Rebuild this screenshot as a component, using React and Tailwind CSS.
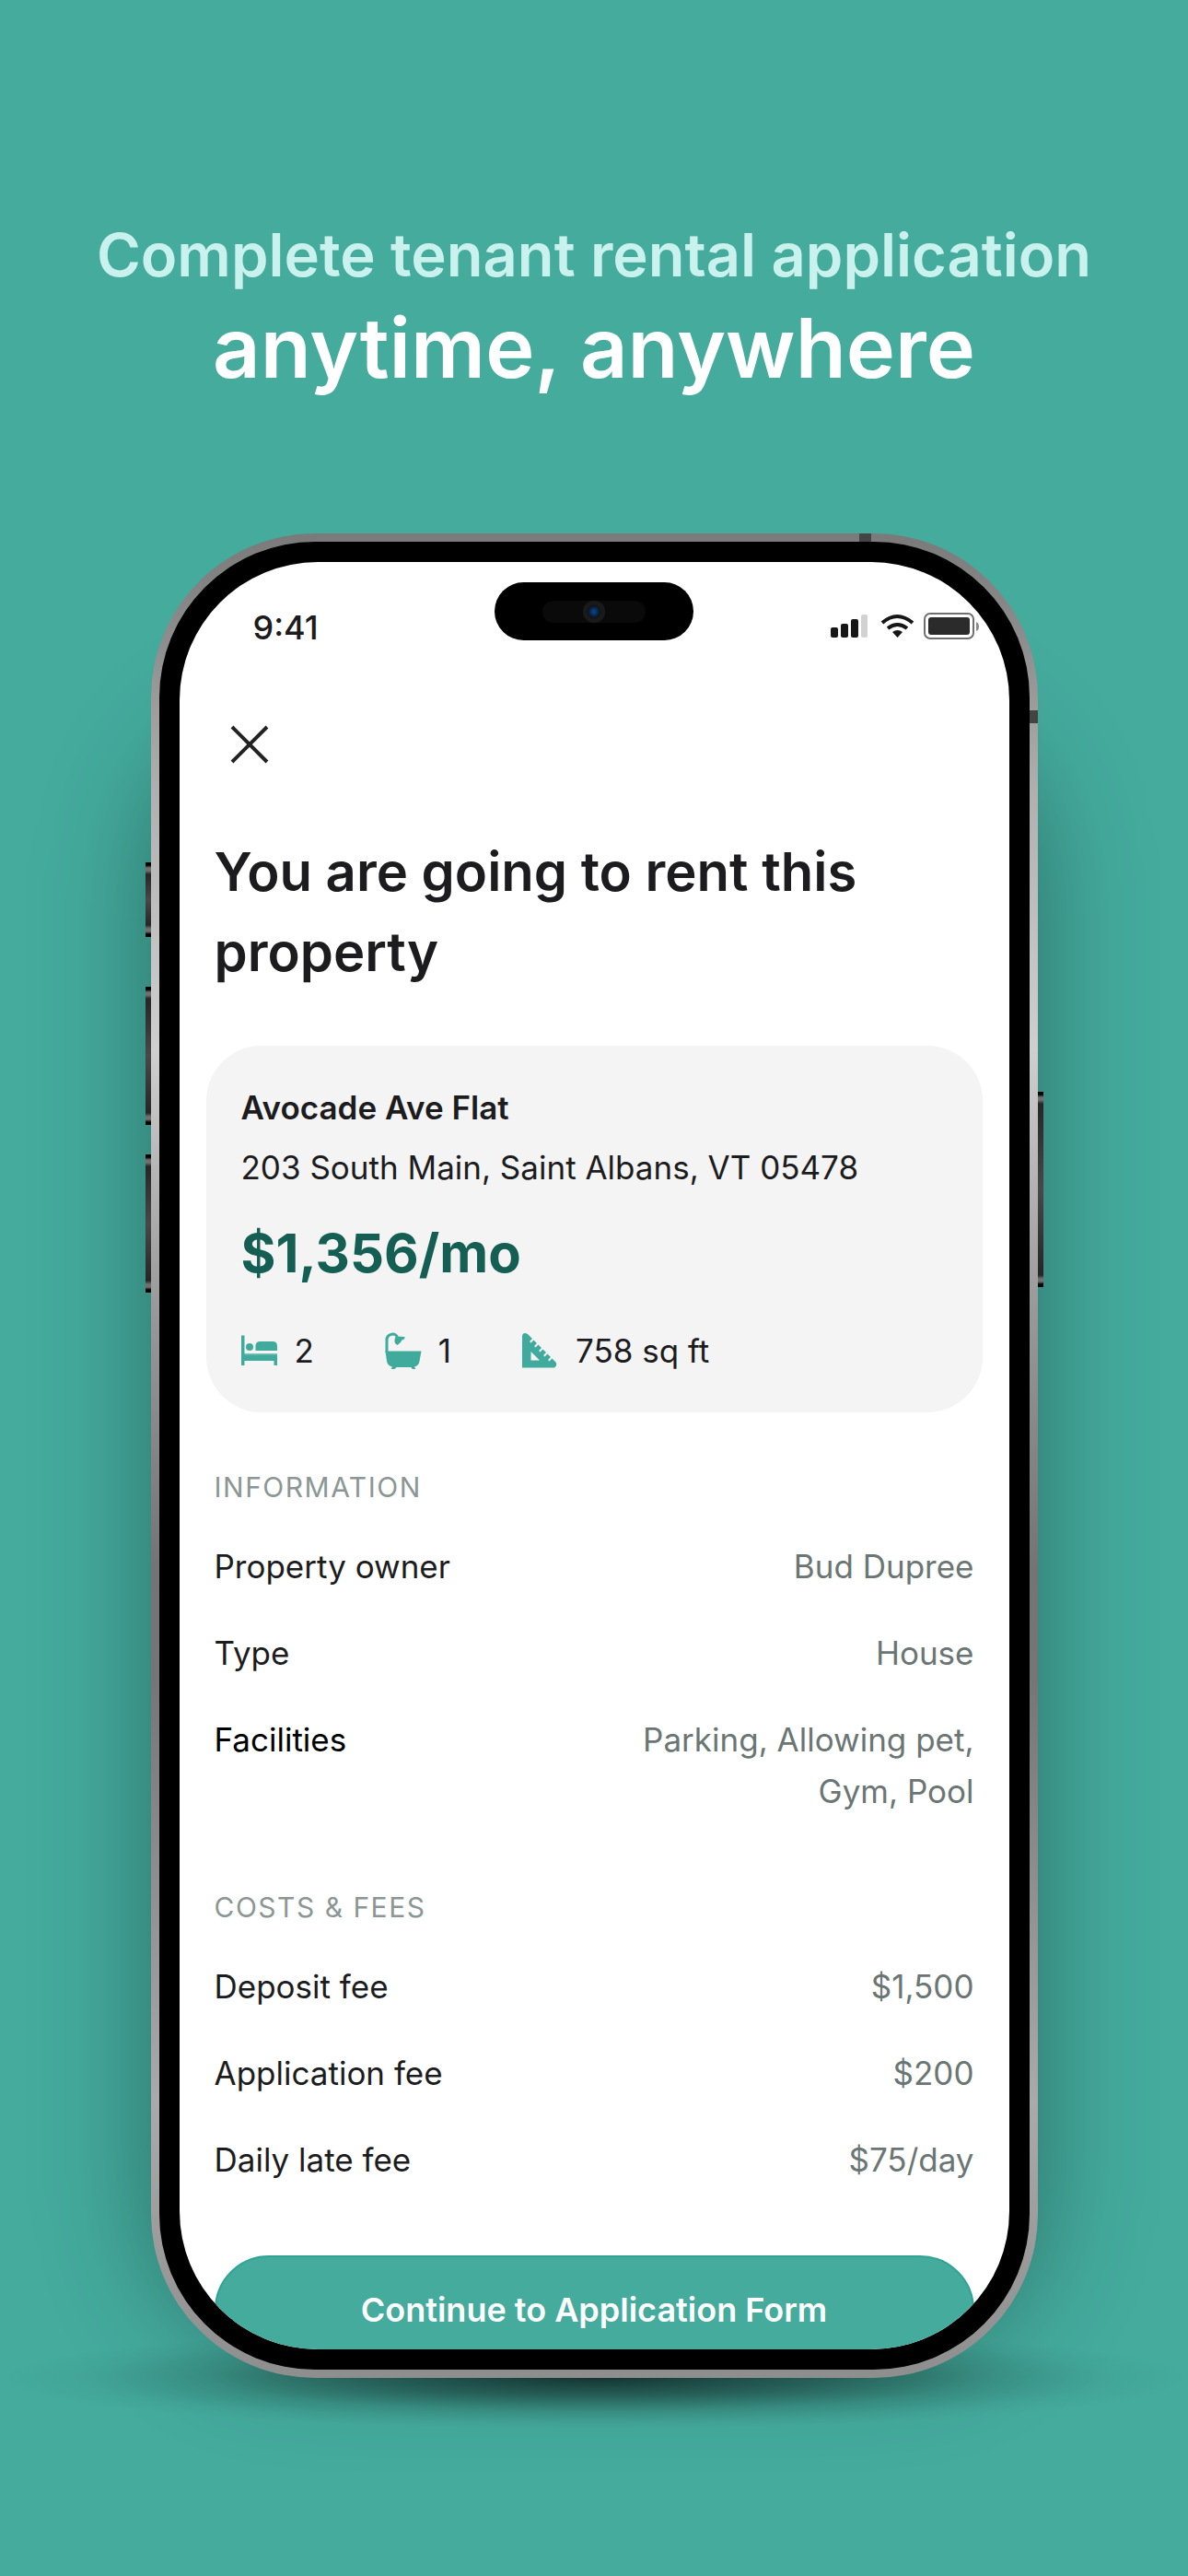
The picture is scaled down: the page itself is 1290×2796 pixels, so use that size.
import React from 'react';

const information = [
  { label: 'Property owner', value: 'Bud Dupree' },
  { label: 'Type', value: 'House' },
  { label: 'Facilities', value: 'Parking, Allowing pet, Gym, Pool', strong: true },
];

const fees = [
  { label: 'Deposit fee', value: '$1,500' },
  { label: 'Application fee', value: '$200' },
  { label: 'Daily late fee', value: '$75/day' },
];

function BedIcon() {
  return (
    <svg className="h-10 w-10" viewBox="0 0 40 40" fill="currentColor" aria-hidden="true">
      <path d="M0 3.500h3.500v19.500H39v13h-3.500v-5h-32v5H0z" />
      <path d="M3.500 24.500H39v-1.500H3.500z" fill="#79c4b9" />
      <circle cx="9" cy="16" r="4" />
      <path d="M15.500 20v-5q0-5 5-5H34q5 0 5 5v5z" />
    </svg>
  );
}

function BathIcon() {
  return (
    <svg className="h-10 w-10" viewBox="0 0 40 40" fill="currentColor" aria-hidden="true">
      <path d="M2 22V8.500C2 1 12.500 0 13.500 6" fill="none" stroke="currentColor" strokeWidth="3" />
      <path d="M12 4.500l9.500.5q.5 2.500-3 3.500-1 3-5 5.500l-2.500-2q-1.500-4 1-7.500z" />
      <path d="M.5 20.500h39l-2 11q-1 5-5.500 6l1.500 3h-3.500l-1.500-2.500h-16L10 40.500H6.500L8 37.500q-5-1-6-6z" />
    </svg>
  );
}

function RulerIcon() {
  return (
    <svg className="h-10 w-10" viewBox="0 0 40 40" fill="currentColor" aria-hidden="true">
      <path
        fillRule="evenodd"
        d="M0 4Q1-1 6 2l5 5-3 3 1.500 1.500 3-3 3.500 3.500-3 3 1.500 1.500 3-3 3.500 3.500-3 3 1.500 1.500 3-3 3.500 3.500-3 3 1.500 1.500 3-3 3.500 3.500-3 3 1.500 1.500 3-3 3.500 3.500q3 3-1 6.500H0zM9.500 21v9.500H19z"
      />
    </svg>
  );
}

function StatusIcons() {
  return (
    <svg className="h-8 w-[162px]" viewBox="0 0 162 32" fill="#161616" aria-hidden="true">
      <rect x="0" y="16" width="8" height="11" rx="2" />
      <rect x="11" y="12" width="8" height="15" rx="2" />
      <rect x="22" y="7" width="8" height="20" rx="2" />
      <rect x="33" y="2" width="7" height="25" rx="2" fill="#d2d2d2" />
      <g fill="none" stroke="#161616" strokeWidth="4">
        <path d="M56 11q16-14 33 0" />
        <path d="M62 17q10.500-8 21 0" />
      </g>
      <path d="M67 21q5.500-4 11 0l-5.500 6z" />
      <rect x="102" y="1" width="53" height="27" rx="6" fill="#fff" stroke="#6f6f6f" strokeWidth="2" />
      <rect x="106" y="5" width="45" height="19" rx="3" fill="#2b2b2b" />
      <path d="M158 10q3 1 3 5t-3 5z" fill="#8a8a8a" />
    </svg>
  );
}

function SideButton({ className }) {
  return (
    <div
      className={`absolute w-[6px] bg-[linear-gradient(#000_0px,#000_3px,#707070_6px,#707070_9px,#262626_13px,#484848_50%,#262626_calc(100%-13px),#707070_calc(100%-9px),#707070_calc(100%-6px),#000_calc(100%-3px))] ${className}`}
    />
  );
}

function Stat({ icon, children }) {
  return (
    <li className="flex items-center gap-[18px]">
      <span className="text-[#40ab9c]">{icon}</span>
      {children}
    </li>
  );
}

function DetailList({ title, items, className }) {
  return (
    <section className={`px-[9px] ${className}`}>
      <h2 className="mb-[38px] text-[30px] leading-10 tracking-wider text-[#8c9795] uppercase">{title}</h2>
      <dl className="space-y-[38px] leading-14">
        {items.map((item) => (
          <div key={item.label} className="flex justify-between">
            <dt className={item.strong ? 'text-black' : 'text-[#1c1c1e]'}>{item.label}</dt>
            <dd className="max-w-[400px] text-right text-[#6b7674]">{item.value}</dd>
          </div>
        ))}
      </dl>
    </section>
  );
}

function Screen() {
  return (
    <div className="relative overflow-hidden rounded-[150px] bg-white px-[29px] text-[35px] text-[#1c1c1e]">
      <div className="absolute inset-x-0 top-[22px] flex justify-center">
        <div className="flex h-[63px] w-[216px] items-center justify-center rounded-full bg-black">
          <div className="flex h-6 w-[112px] items-center justify-center rounded-full bg-[#0a0a0a]">
            <div className="size-6 rounded-full bg-[radial-gradient(circle,#0a4a94_0px,#06284f_4px,#101214_7px,#1a1a1a_8px)]" />
          </div>
        </div>
      </div>

      <div className="flex h-[142px] items-center justify-between pr-[3px] pl-[51px]">
        <span className="text-[36px] font-medium">9:41</span>
        <StatusIcons />
      </div>

      <button type="button" aria-label="Close" className="mt-[35px] ml-[26px] block">
        <svg className="size-[42px]" viewBox="0 0 42 42" fill="none" stroke="#222" strokeWidth="4" aria-hidden="true">
          <path d="M2 2l38 38M40 2L2 40" />
        </svg>
      </button>

      <h1 className="mt-[74px] px-[9px] text-[58px] leading-[87px] font-semibold">You are going to rent this property</h1>

      <div className="mt-[58px] rounded-[60px] bg-[#f4f4f4] px-[38px] pt-[35px] pb-[35px]">
        <h2 className="leading-[65px] font-semibold">Avocade Ave Flat</h2>
        <p className="leading-[65px]">203 South Main, Saint Albans, VT 05478</p>
        <p className="mt-5 text-[58px] leading-[80px] font-bold text-[#155e54]">$1,356/mo</p>
        <ul className="mt-[34px] flex gap-[77px] leading-[64px]">
          <Stat icon={<BedIcon />}>2</Stat>
          <Stat icon={<BathIcon />}>1</Stat>
          <Stat icon={<RulerIcon />}>758 sq ft</Stat>
        </ul>
      </div>

      <DetailList title="Information" items={information} className="mt-[61px]" />
      <DetailList title="Costs & Fees" items={fees} className="mt-[78px]" />

      <div className="mt-[76px] -mb-4 px-[9px]">
        <button
          type="button"
          className="h-[118px] w-full rounded-full border-2 border-[#30a393] bg-[#44ab9d] text-[36px] font-semibold text-white"
        >
          Continue to Application Form
        </button>
      </div>
    </div>
  );
}

export default function App() {
  return (
    <main className="flex min-h-screen flex-col items-center overflow-hidden bg-[#44ab9d] font-[Inter,sans-serif]">
      <header className="pt-[232px] text-center font-semibold">
        <p className="text-[65px] leading-[90px] text-[#c9f2ee]">Complete tenant rental application</p>
        <p className="text-[90px] leading-[112px] text-white">anytime, anywhere</p>
      </header>

      <div className="relative mt-[145px] w-full max-w-[963px]">
        {/* soft shadow round the body, then the one it casts on the floor */}
        <div className="absolute inset-x-0 top-[200px] bottom-[30px] rounded-[170px] bg-black/35 blur-[60px]" />
        <div className="absolute -inset-x-[164px] -bottom-[56px] h-[112px] bg-[radial-gradient(closest-side,rgba(0,0,0,0.65),rgba(0,0,0,0.4)_35%,rgba(0,0,0,0.14)_65%,rgba(0,0,0,0.04)_85%,transparent)]" />

        <SideButton className="-left-[6px] top-[357px] h-[81px]" />
        <SideButton className="-left-[6px] top-[492px] h-[150px]" />
        <SideButton className="-left-[6px] top-[674px] h-[150px]" />
        <SideButton className="-right-[6px] top-[606px] h-[212px]" />

        <div className="relative overflow-hidden rounded-[178px] bg-[linear-gradient(#7a7a7a,#8e8e8e_6%,#b0b0b0_14%,#cfcfcf_28%,#999_42%,#747474_56%,#757575_62%,#aaa_85%,#8e8e8e)] p-[9px]">
          <div className="absolute top-0 right-[181px] h-[9px] w-[13px] bg-[#444]" />
          <div className="absolute top-[192px] right-0 h-[14px] w-[9px] bg-[#444]" />
          <div className="relative rounded-[169px] bg-black p-[22px]">
            <Screen />
          </div>
        </div>
      </div>
    </main>
  );
}
